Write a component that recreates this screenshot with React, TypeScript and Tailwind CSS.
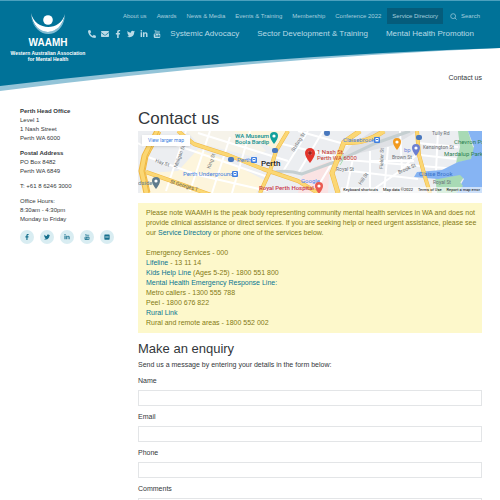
import React from "react";
import {
  FaEnvelope,
  FaFacebookF,
  FaFlickr,
  FaLinkedinIn,
  FaPhoneAlt,
  FaTwitter,
} from "react-icons/fa";

const topLinks = [
  "About us",
  "Awards",
  "News & Media",
  "Events & Training",
  "Membership",
  "Conference 2022",
];

const mainLinks = [
  "Systemic Advocacy",
  "Sector Development & Training",
  "Mental Health Promotion",
];

const fields = [
  { id: "name", label: "Name", type: "text" },
  { id: "email", label: "Email", type: "email" },
  { id: "phone", label: "Phone", type: "tel" },
];

const YoutubeIcon: React.FC = () => (
  <svg viewBox="0 0 16 16" width="1em" height="1em" fill="currentColor">
    <path
      fillRule="evenodd"
      d="M3.500 7h9Q14.500 7 14.500 9v4.500Q14.500 16 12 16h-8Q1.500 16 1.500 13.500V9Q1.500 7 3.500 7zM3 8.500v1h1V14h1V9.500h1v-1zM6.500 10v4h2.800v-4h-.9v3.200h-1V10zM10 8.500V14h3v-4h-2V8.500zM11 11h1v2h-1z"
    />
    <path
      d="M3.500 0l1.300 3.200V6M6.100 0L4.800 3.200M7.200 2.300h1.600v3.200H7.200zM10.700 1.800v3.700h2V1.800"
      fill="none"
      stroke="currentColor"
      strokeWidth="1.100"
    />
  </svg>
);

const socials = [
  { name: "Facebook", icon: <FaFacebookF /> },
  { name: "Twitter", icon: <FaTwitter /> },
  { name: "LinkedIn", icon: <FaLinkedinIn /> },
  { name: "YouTube", icon: <YoutubeIcon /> },
];

const contactIcons = [
  { name: "Phone", icon: <FaPhoneAlt /> },
  { name: "Mail", icon: <FaEnvelope /> },
  ...socials,
];

const Logo: React.FC = () => (
  <a
    href="#"
    className="flex w-[70px] shrink-0 flex-col items-center pt-[13px] font-bold text-white"
  >
    <svg viewBox="0 0 36 22" className="w-9">
      <circle cx="18" cy="7" r="4.800" fill="#fff" />
      <path d="M1 3C6 24 29 24 35 3C32 27 5 27 1 3z" fill="#7fbcd3" />
      <path d="M1 0C5 18 30 19 35 1C31 25 4 25 1 0z" fill="#fff" />
    </svg>
    <span className="text-[10px] leading-[15px]">WAAMH</span>
    <span className="text-center text-[5px] leading-[6px] whitespace-nowrap">
      Western Australian Association
      <br />
      for Mental Health
    </span>
  </a>
);

const Header: React.FC = () => (
  <header className="relative h-[92px] overflow-hidden">
    <svg
      viewBox="0 0 500 92"
      preserveAspectRatio="none"
      className="absolute inset-0 h-full w-full"
    >
      <path d="M0 0H500V48Q250 59 0 91z" fill="#93c4d8" />
      <path d="M0 0H500V48Q250 56 0 86z" fill="#007298" />
      <path d="M0 0H500V1H0z" fill="#4ba0be" />
    </svg>
    <div className="relative flex justify-between pr-[17px] pl-[13px]">
      <Logo />
      <div className="flex flex-col items-end pt-2">
        <nav className="flex h-4 items-center text-[6px] whitespace-nowrap text-[#a6cfde]">
          {topLinks.map((link) => (
            <a key={link} href="#" className="px-[5px]">
              {link}
            </a>
          ))}
          <a href="#" className="ml-px bg-[#055c7b] px-[5px] leading-4">
            Service Directory
          </a>
          <label className="flex items-center gap-1 pl-[7px]">
            <svg viewBox="0 0 20 20" className="size-[7px]" fill="none" stroke="currentColor" strokeWidth="2">
              <circle cx="9" cy="9" r="7" />
              <path d="M14 14l5 5" />
            </svg>
            <input
              type="text"
              aria-label="Search"
              placeholder="Search"
              className="w-[22px] outline-none placeholder:text-[#a6cfde]"
            />
          </label>
        </nav>
        <nav className="flex h-5 items-center text-[8px] whitespace-nowrap text-[#b9dae6]">
          <div className="flex gap-[5px]">
            {contactIcons.map(({ name, icon }) => (
              <a key={name} href="#" aria-label={name} className="w-2">
                {icon}
              </a>
            ))}
          </div>
          {mainLinks.map((link) => (
            <a key={link} href="#" className="px-[9px]">
              {link}
            </a>
          ))}
        </nav>
      </div>
    </div>
  </header>
);

const Sidebar: React.FC = () => (
  <aside className="flex w-[118px] shrink-0 flex-col gap-1.5 text-[6px] leading-[9px]">
    <p>
      <strong>Perth Head Office</strong>
      <br />
      Level 1<br />1 Nash Street
      <br />
      Perth WA 6000
    </p>
    <p>
      <strong>Postal Address</strong>
      <br />
      PO Box 8482
      <br />
      Perth WA 6849
    </p>
    <p>T: +61 8 6246 3000</p>
    <p>
      Office Hours:
      <br />
      8:30am - 4:30pm
      <br />
      Monday to Friday
    </p>
    <div className="flex gap-1.5 text-[#17718e]">
      {[...socials, { name: "Flickr", icon: <FaFlickr /> }].map(({ name, icon }) => (
        <a
          key={name}
          href="#"
          aria-label={name}
          className="flex size-3.5 items-center justify-center rounded-full bg-[#d9edf2]"
        >
          {icon}
        </a>
      ))}
    </div>
  </aside>
);

const Pin: React.FC<{ x: number; y: number; color: string; r?: number }> = ({ x, y, color, r = 4 }) => (
  <g transform={`translate(${x} ${y})`}>
    <path
      d={`M${-r} 0A${r} ${r} 0 1 1 ${r} 0Q${r} ${r * 0.7} 0 ${r * 2}Q${-r} ${r * 0.7} ${-r} 0z`}
      fill={color}
    />
    <circle r={r * 0.4} fill="#fff" />
  </g>
);

const Station: React.FC<{ x: number; y: number }> = ({ x, y }) => (
  <g transform={`translate(${x} ${y})`}>
    <rect width="6" height="6" rx="1" fill="#3f7ee0" />
    <rect x="1.500" y="1" width="3" height="3.500" rx=".5" fill="#fff" />
    <path d="M2 2h2v1H2z" fill="#3f7ee0" />
  </g>
);

const Map: React.FC = () => (
  <div className="relative h-[62px] overflow-hidden bg-[#eceef1]">
    <svg
      viewBox="0 0 344 62"
      preserveAspectRatio="xMidYMid slice"
      className="h-full w-full font-[Roboto,sans-serif] text-[6px]"
    >
      {/* city blocks */}
      <path d="M94 0H148L140 20L118 8zM10 42L2 62H118L128 50L88 29L60 18L40 40z" fill="#fdf5dc" />
      <path d="M48 0L94 0L118 8L128 20L112 25L60 12z" fill="#f6f3ea" />
      <path d="M176 36L192 30L190 62H160L164 46z" fill="#fae3e3" />
      <path d="M216 12L235 0H280L256 14L222 22L200 30z" fill="#dfe1e5" />
      {/* side streets */}
      <g fill="none" stroke="#fff" strokeWidth="2">
        <path d="M48 0L28 60M72 0L52 60M92 6L74 62M112 0L94 62M10 26L60 44L130 60M32 12L130 46M60 2L150 30M0 12L14 20" />
        <path d="M170 0L144 42M185 0L160 42M140 12L198 26M160 0L210 14M176 62L204 15M198 28L344 40M196 38L280 48M232 20V62M250 16L246 62M216 22L208 62M262 0L264 40M280 12L320 16M282 24L318 28M300 0L298 40M232 30H276M230 62L262 40L280 22" />
      </g>
      <path d="M132 42Q148 38 164 43L202 29L238 12L272 0" fill="none" stroke="#c5cfd1" strokeWidth="3" />
      <path d="M203 22Q208 26 202 34" fill="none" stroke="#a9dfb5" />
      {/* river and parkland */}
      <path d="M320 0H330L335 16L344 20V34L326 30L318 32L322 16zM299 62L297 44L313 37L330 40L322 52L326 62z" fill="#a8dab5" />
      <path d="M330 0H344V62H318L326 48L322 44L300 48L276 46L279 41L304 39L320 31L333 28L336 16z" fill="#86b4f3" />
      <path d="M300 50L318 46L325 55L318 62H302z" fill="#a8dab5" />
      {/* main roads */}
      <g fill="none" stroke="#f0b844" strokeLinejoin="round">
        <path d="M20 0L7 25L4 40L9 62" strokeWidth="7" />
        <path d="M8 41L45 54L76 65M40 0L56 13L90 24L125 38L160 50L180 62M150 0L138 20L132 40L122 62" strokeWidth="4" />
        <path d="M222 0L206 11L200 27L194 42L200 62M206 11Q226 14 246 0" strokeWidth="5" />
        <path d="M279 0L281 24L287 46L292 62" strokeWidth="4" />
      </g>
      <g fill="none" stroke="#fbd774" strokeLinejoin="round">
        <path d="M20 0L7 25L4 40L9 62" strokeWidth="5" />
        <path d="M8 41L45 54L76 65M40 0L56 13L90 24L125 38L160 50L180 62M150 0L138 20L132 40L122 62" strokeWidth="3" />
        <path d="M222 0L206 11L200 27L194 42L200 62M206 11Q226 14 246 0" strokeWidth="4" />
        <path d="M279 0L281 24L287 46L292 62" strokeWidth="3" />
      </g>
      <path d="M21 0L9 25L6 40L11 62" fill="none" stroke="#f0b844" />
      {/* street names */}
      <g fill="#6b7075" fontSize="5">
        <text x="17" y="31" transform="rotate(18 17 31)">Hay St</text>
        <text x="39" y="37" transform="rotate(-70 39 37)">Milligan St</text>
        <text x="72" y="38" transform="rotate(-70 72 38)">King St</text>
        <text x="156" y="21" transform="rotate(-58 156 21)">Stirling St</text>
        <text x="32" y="52" transform="rotate(17 32 52)" fill="#54585c">St Georges T</text>
        <text x="294" y="4">Tully Rd</text>
        <text x="285" y="18">Kensington St</text>
        <text x="254" y="28">Brown St</text>
        <text x="198" y="40">Royal St</text>
        <text x="295" y="53">Royal St</text>
        <text x="245" y="38" transform="rotate(-88 245 38)">Fielder St</text>
        <text x="223" y="54" transform="rotate(-55 223 54)">Hill St</text>
        <text x="261" y="43" transform="rotate(-24 261 43)" fill="#54585c">Brook St</text>
      </g>
      {/* places */}
      <g fill="#12908e" fontWeight="500">
        <text x="97" y="7">WA Museum</text>
        <text x="97" y="13">Boola Bardip</text>
      </g>
      <text x="45" y="45" fill="#3f7ee0">Perth Underground</text>
      <text x="99" y="31" fill="#3f7ee0">Perth</text>
      <text x="205" y="11" fill="#3f7ee0">Claisebrook</text>
      <text x="266" y="21" fill="#6f83d8">bp</text>
      <text x="0" y="54" fill="#5f7b8c">dside</text>
      <text x="281" y="45" fill="#3971c7">Claise Brook</text>
      <g fill="#2c8052">
        <text x="316" y="13">Chevron Pa</text>
        <text x="306" y="25">Mardalup Park</text>
      </g>
      <text x="163" y="52" fill="#4285f4">Google</text>
      <text x="121" y="59" fill="#c8354c" fontWeight="500">Royal Perth Hospital</text>
      <g fill="#c5342c">
        <text x="179" y="23">1 Nash St,</text>
        <text x="179" y="29">Perth WA 6000</text>
      </g>
      <text x="123" y="35" fill="#202124" fontSize="8" fontWeight="500">Perth</text>
      <Station x={94} y={40} />
      <Station x={113} y={26} />
      <Station x={236} y={6} />
      <g fill="#4877bd">
        <rect x="90" y="26" width="6" height="5" rx="2" />
        <rect x="134" y="17" width="6" height="5" rx="2" />
        <rect x="278" y="4" width="6" height="5" rx="2" />
        <circle cx="189" cy="2" r="3" />
      </g>
      <Pin x={136} y={5} color="#12a19c" />
      <Pin x={18} y={50} color="#5f7b8c" />
      <Pin x={259} y={11} color="#f29a1f" />
      <Pin x={278} y={17} color="#6c7fd0" />
      <Pin x={181} y={55} color="#ea5a50" />
      <Pin x={172} y={22} color="#e3342b" r={5} />
      <circle cx="172" cy="22" r="2" fill="#9f1d18" />
    </svg>
    <a
      href="#"
      className="absolute top-1 left-1 bg-white px-1.5 font-[Roboto,sans-serif] text-[5px] leading-[11px] text-[#3b7de0] shadow-sm"
    >
      View larger map
    </a>
    <div className="absolute right-0 bottom-0 flex gap-[5px] bg-white/60 px-0.5 font-[Roboto,sans-serif] text-[4px] leading-[6px] text-black">
      <button type="button">Keyboard shortcuts</button>
      <span>Map data ©2022</span>
      <a href="#">Terms of Use</a>
      <a href="#">Report a map error</a>
    </div>
  </div>
);

const ServiceLink: React.FC<{ children: React.ReactNode }> = ({ children }) => (
  <a href="#" className="text-[#087592]">
    {children}
  </a>
);

const Notice: React.FC = () => (
  <div className="mt-2.5 bg-[#fdf8cb] py-[5px] pr-1 pl-2 text-[7px] leading-[10px] text-[#857a14]">
    <p>
      Please note WAAMH is the peak body representing community mental health services in WA and
      does not provide clinical assistance or direct services. If you are seeking help or need
      urgent assistance, please see our <ServiceLink>Service Directory</ServiceLink> or phone one
      of the services below.
    </p>
    <p className="pt-2.5">
      Emergency Services - 000
      <br />
      <ServiceLink>Lifeline</ServiceLink> - 13 11 14
      <br />
      <ServiceLink>Kids Help Line</ServiceLink> (Ages 5-25) - 1800 551 800
      <br />
      <ServiceLink>Mental Health Emergency Response Line:</ServiceLink>
      <br />
      Metro callers - 1300 555 788
      <br />
      Peel - 1800 676 822
      <br />
      <ServiceLink>Rural Link</ServiceLink>
      <br />
      Rural and remote areas - 1800 552 002
    </p>
  </div>
);

const EnquiryForm: React.FC = () => (
  <form className="flex flex-col gap-1.5 text-[7px] leading-[10px]">
    {fields.map(({ id, label, type }) => (
      <div key={id} className="flex flex-col gap-1">
        <label htmlFor={id}>{label}</label>
        <input id={id} type={type} className="h-4 border border-[#e3e5e7] bg-white px-1 outline-none" />
      </div>
    ))}
    <div className="flex flex-col gap-1">
      <label htmlFor="comments">Comments</label>
      <textarea id="comments" rows={6} className="border border-[#e3e5e7] bg-white p-1 outline-none" />
    </div>
  </form>
);

const App: React.FC = () => {
  return (
    <div className="h-screen overflow-hidden bg-white font-['Liberation_Sans',Arial,sans-serif] text-[#33373b]">
      <Header />
      <div className="-mt-5 px-[18px] text-right text-[7px] leading-3">Contact us</div>
      <div className="flex pt-[23px] pr-[18px] pl-5">
        <Sidebar />
        <main className="min-w-0 flex-1">
          <h1 className="text-[17px] leading-6">Contact us</h1>
          <Map />
          <Notice />
          <h2 className="pt-2 text-[13px] leading-4">Make an enquiry</h2>
          <p className="pt-[3px] pb-1.5 text-[7px] leading-[10px]">
            Send us a message by entering your details in the form below:
          </p>
          <EnquiryForm />
        </main>
      </div>
    </div>
  );
};

export default App;
